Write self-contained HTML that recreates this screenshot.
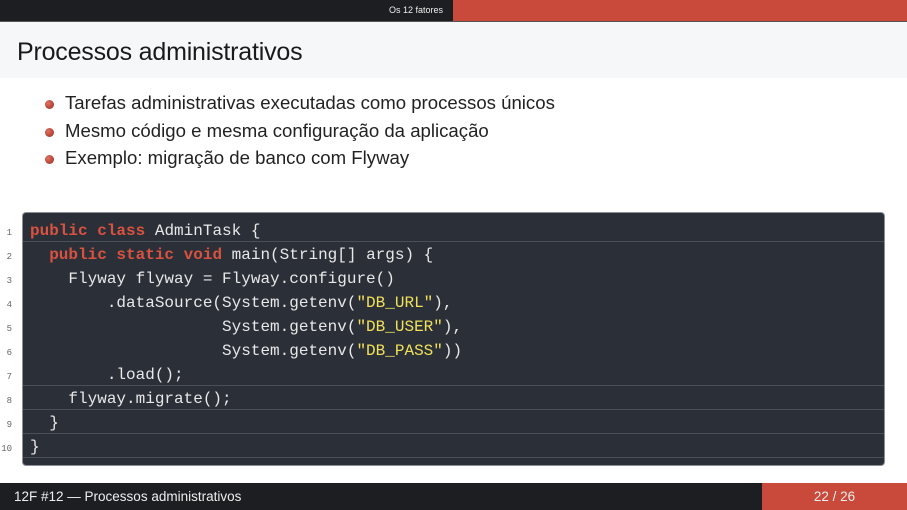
<!DOCTYPE html>
<html><head><meta charset="utf-8"><style>
body{margin:0;width:907px;height:510px;background:#fff;position:relative;overflow:hidden;font-family:"Liberation Sans",sans-serif}
.top{position:absolute;left:0;top:0;width:907px;height:21px;background:#1c1e22}
.top .r{position:absolute;left:453px;top:0;right:0;height:21px;background:#c9493a}
.top .t{position:absolute;right:464px;top:5px;font-size:9px;color:#eee}
.tb{position:absolute;left:0;top:21px;width:907px;height:56px;background:#f6f7f9;border-top:1px solid #555}
.tb h1{margin:0;position:absolute;left:17px;top:16px;font-size:25px;font-weight:normal;color:#1a1a1a;letter-spacing:-0.2px}
ul{position:absolute;left:0;top:90px;margin:0;padding:0;list-style:none}
li{position:absolute;left:65px;white-space:nowrap;font-size:18.6px;color:#222}
li:before{content:"";position:absolute;left:-20px;top:8px;width:9px;height:9px;border-radius:50%;background:radial-gradient(circle at 35% 35%,#e07060,#9a2a1e)}
.code{position:absolute;left:22px;top:212px;width:861px;height:252px;background:#2b2f38;border:1px solid #8a8f98;border-radius:4px}
.ln{position:absolute;left:0;width:12px;text-align:right;font:9px "Liberation Mono",monospace;color:#666}
.cl{position:absolute;left:23px;width:861px;height:23px;border-bottom:1px solid #4a4f58;font:16px/24px "Liberation Mono",monospace;color:#e8e8e8;white-space:pre;box-sizing:border-box;padding-left:7px}
.k{color:#d9523f;font-weight:bold}.s{color:#f1e05a}
.foot{position:absolute;left:0;top:483px;width:907px;height:27px;background:#1c1e22;color:#eee;font-size:13.5px}
.foot .r{position:absolute;left:762px;top:0;right:0;height:27px;background:#c9493a;text-align:center;line-height:27px}
.foot .l{position:absolute;left:14px;top:6px}
</style></head><body>
<div class="top"><div class="r"></div><div class="t">Os 12 fatores</div></div>
<div class="tb"><h1>Processos administrativos</h1></div>
<ul>
<li style="top:2px">Tarefas administrativas executadas como processos únicos</li>
<li style="top:30px">Mesmo código e mesma configuração da aplicação</li>
<li style="top:57px">Exemplo: migração de banco com Flyway</li>
</ul>
<div class="code"></div>
<div class="ln" style="top:228px">1</div><div class="ln" style="top:252px">2</div><div class="ln" style="top:276px">3</div><div class="ln" style="top:300px">4</div><div class="ln" style="top:324px">5</div><div class="ln" style="top:348px">6</div><div class="ln" style="top:372px">7</div><div class="ln" style="top:396px">8</div><div class="ln" style="top:420px">9</div><div class="ln" style="top:444px">10</div>
<div class="cl" style="top:219px"><span class="k">public</span> <span class="k">class</span> AdminTask {</div>
<div class="cl" style="top:243px;border:none">  <span class="k">public</span> <span class="k">static</span> <span class="k">void</span> main(String[] args) {</div>
<div class="cl" style="top:267px;border:none">    Flyway flyway = Flyway.configure()</div>
<div class="cl" style="top:291px;border:none">        .dataSource(System.getenv(<span class="s">"DB_URL"</span>),</div>
<div class="cl" style="top:315px;border:none">                    System.getenv(<span class="s">"DB_USER"</span>),</div>
<div class="cl" style="top:339px;border:none">                    System.getenv(<span class="s">"DB_PASS"</span>))</div>
<div class="cl" style="top:363px">        .load();</div>
<div class="cl" style="top:387px">    flyway.migrate();</div>
<div class="cl" style="top:411px">  }</div>
<div class="cl" style="top:435px">}</div>
<div class="foot"><div class="l">12F #12 — Processos administrativos</div><div class="r">22 / 26</div></div>
</body></html>
